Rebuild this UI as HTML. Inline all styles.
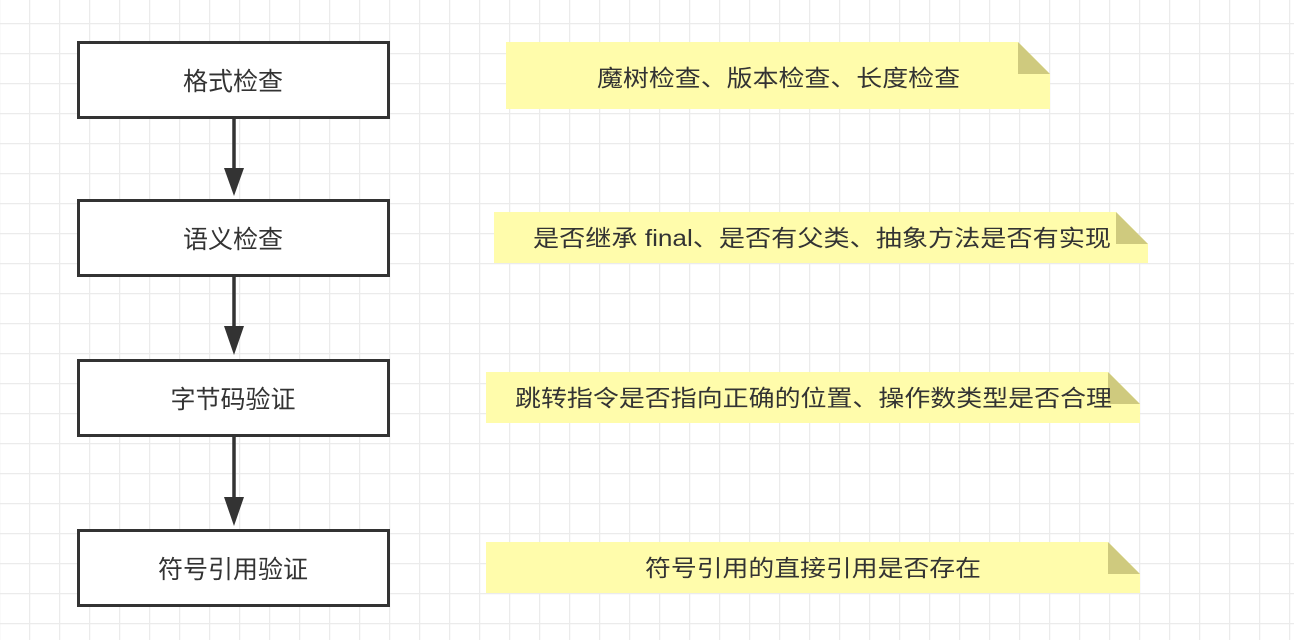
<!DOCTYPE html>
<html><head><meta charset="utf-8"><style>
html,body{margin:0;padding:0;background:#fff;width:1294px;height:640px;overflow:hidden}
svg{display:block}
text{font-family:"Liberation Sans","Noto Sans CJK SC",sans-serif;fill:#333}
</style></head><body>
<svg width="1294" height="640" xmlns="http://www.w3.org/2000/svg">
<defs>
<pattern id="g" x="29" y="23" width="30" height="30" patternUnits="userSpaceOnUse">
<path d="M0.5 0V30M0 0.5H30" stroke="#ebebeb" stroke-width="1.5" fill="none"/>
</pattern>
</defs>
<rect width="1294" height="640" fill="#fff"/>
<rect width="1294" height="640" fill="url(#g)"/>

<g fill="#fff" stroke="#333" stroke-width="3">
<rect x="78.5" y="42.5" width="310" height="75"/>
<rect x="78.5" y="200.5" width="310" height="75"/>
<rect x="78.5" y="360.5" width="310" height="75"/>
<rect x="78.5" y="530.5" width="310" height="75"/>
</g>
<g stroke="#333" stroke-width="3.5">
<line x1="234" y1="118" x2="234" y2="172"/>
<line x1="234" y1="276" x2="234" y2="330"/>
<line x1="234" y1="436" x2="234" y2="500"/>
</g>
<g fill="#333">
<polygon points="224,168 244,168 234,196"/>
<polygon points="224,326 244,326 234,355"/>
<polygon points="224,497 244,497 234,526"/>
</g>
<g font-size="25" text-anchor="middle">
<text x="233" y="90">格式检查</text>
<text x="233" y="248">语义检查</text>
<text x="233" y="408">字节码验证</text>
<text x="233" y="578">符号引用验证</text>
</g>

<g fill="#fffcab">
<polygon points="506,42 1018,42 1050,74 1050,109 506,109"/>
<polygon points="494,212 1116,212 1148,244 1148,263 494,263"/>
<polygon points="486,372 1108,372 1140,404 1140,423 486,423"/>
<polygon points="486,542 1108,542 1140,574 1140,593 486,593"/>
</g>
<g fill="#cfca7e">
<polygon points="1018,42 1050,74 1018,74"/>
<polygon points="1116,212 1148,244 1116,244"/>
<polygon points="1108,372 1140,404 1108,404"/>
<polygon points="1108,542 1140,574 1108,574"/>
</g>
<g font-size="23">
<text x="597" y="86" textLength="363" lengthAdjust="spacingAndGlyphs">魔树检查、版本检查、长度检查</text>
<text x="533" y="246" textLength="578" lengthAdjust="spacingAndGlyphs">是否继承 final、是否有父类、抽象方法是否有实现</text>
<text x="515" y="406" textLength="597" lengthAdjust="spacingAndGlyphs">跳转指令是否指向正确的位置、操作数类型是否合理</text>
<text x="645" y="576" textLength="336" lengthAdjust="spacingAndGlyphs">符号引用的直接引用是否存在</text>
</g>
</svg>
</body></html>
